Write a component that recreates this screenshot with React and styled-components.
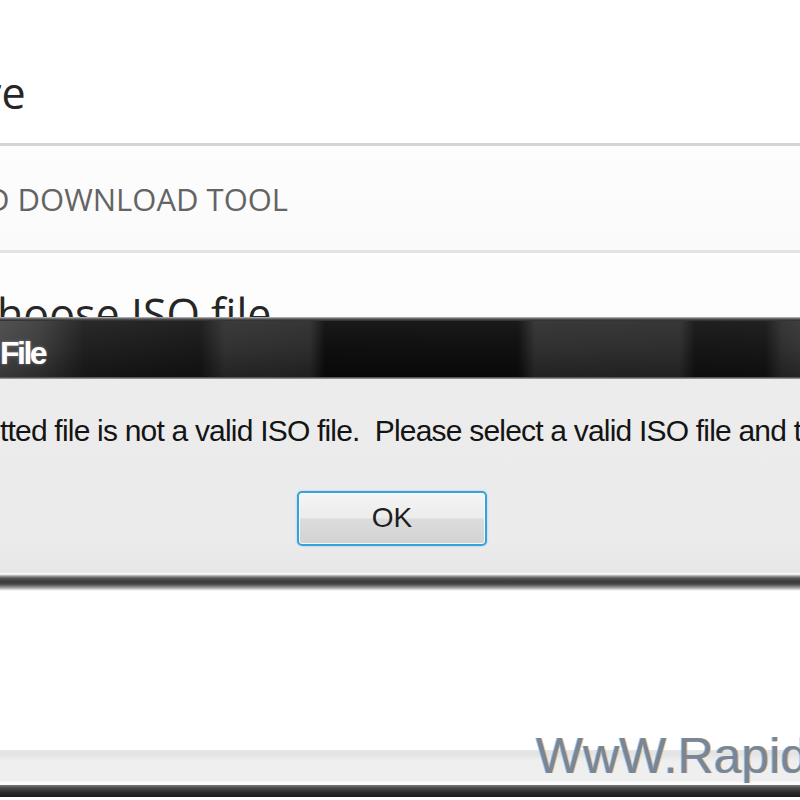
import React from "react";
import styled, { createGlobalStyle } from "styled-components";

const GlobalStyle = createGlobalStyle`
  html, body {
    margin: 0;
    padding: 0;
    background: #ffffff;
    overflow: hidden;
  }
  * { box-sizing: border-box; }
`;

const Page = styled.div`
  position: relative;
  width: 800px;
  height: 800px;
  overflow: hidden;
  background: #ffffff;
  display: flex;
  flex-direction: column;
`;

const Header = styled.header`
  height: 143px;
  padding-top: 71px;
  background: #ffffff;
  overflow: hidden;
`;

const PageTitle = styled.div`
  font-family: "Open Sans", "Liberation Sans", sans-serif;
  font-size: 43px;
  font-weight: 500;
  line-height: 43px;
  color: #262626;
  white-space: nowrap;
  text-indent: ${(p) => p.$indent || 0}px;
`;

const ToolBand = styled.div`
  height: 110px;
  border-top: 3px solid #d5d5d5;
  border-bottom: 3px solid #e3e3e3;
  background: linear-gradient(to bottom, #fdfdfd, #fafafa);
  padding-top: 38px;
  overflow: hidden;
`;

const ToolName = styled.div`
  font-family: "Open Sans", "Liberation Sans", sans-serif;
  font-size: 31px;
  font-weight: 500;
  line-height: 31px;
  color: #646464;
  white-space: nowrap;
  text-indent: -13px;
`;

const StepSection = styled.section`
  height: 64px;
  padding-top: 39px;
  background: #fdfdfd;
  overflow: hidden;
`;

const Dialog = styled.div`
  display: flex;
  flex-direction: column;
`;

const DialogTopEdge = styled.div`
  height: 4px;
  background: linear-gradient(to bottom, #c4c4c4 0, #8c8c8c 1px, #555 2px, #2a2a2a 4px);
`;

const TitleBar = styled.div`
  height: 56px;
  padding-top: 16px;
  background:
    linear-gradient(to bottom, rgba(255,255,255,0.06) 0, rgba(255,255,255,0.02) 45%, rgba(0,0,0,0.25) 100%),
    linear-gradient(to right,
      #474747 0, #3a3a3a 40px, #1c1c1c 85px, #151515 200px, #2f2f2f 225px,
      #2a2a2a 310px, #0b0b0b 325px, #0c0c0c 518px, #2d2d2d 535px,
      #2b2b2b 680px, #121212 695px, #131313 765px, #2c2c2c 782px, #323232 800px);
`;

const TitleText = styled.div`
  font-family: "Liberation Sans", Arial, sans-serif;
  font-size: 32px;
  font-weight: 700;
  line-height: 32px;
  letter-spacing: -2.5px;
  color: #ffffff;
  text-shadow: 0 0 3px rgba(255, 255, 255, 0.35);
  white-space: nowrap;
`;

const TitleBottomEdge = styled.div`
  height: 2px;
  background: linear-gradient(to bottom, #3c3c3c, #a8a8a8);
`;

const DialogBody = styled.div`
  height: 194px;
  padding-top: 37px;
  background: linear-gradient(to bottom, #ececec, #ebebeb 85%, #e7e7e7);
  display: flex;
  flex-direction: column;
  gap: 45px;
`;

const Message = styled.div`
  font-family: "Liberation Sans", Tahoma, sans-serif;
  font-size: 30px;
  line-height: 30px;
  letter-spacing: -0.8px;
  color: #141414;
  white-space: pre;
  overflow: hidden;
`;

const ButtonRow = styled.div`
  display: flex;
  justify-content: center;
  padding-right: 16px;
`;

const OkButton = styled.button`
  width: 190px;
  height: 55px;
  border: 2px solid #35a3da;
  border-radius: 5px;
  background: linear-gradient(to bottom, #f5f5f5 0, #ececec 48%, #dcdcdc 52%, #d2d2d2 100%);
  box-shadow: inset 0 0 0 1px rgba(255, 255, 255, 0.85), 0 0 2px rgba(60, 170, 225, 0.5);
  font-family: "Liberation Sans", Tahoma, sans-serif;
  font-size: 28px;
  line-height: 28px;
  color: #1e1e1e;
  padding: 0;
  padding-bottom: 2px;
`;

const DialogBottomFrame = styled.div`
  height: 18px;
  background: linear-gradient(to bottom,
    #f6f6f6 0, #ffffff 1px, #a0a0a0 3px, #5a5a5a 5px, #3c3c3c 8px,
    #444 11px, #8a8a8a 14px, #e6e6e6 17px, #ffffff 18px);
`;

const LowerArea = styled.div`
  height: 159px;
  background: #ffffff;
`;

const StatusBar = styled.div`
  height: 35px;
  background: linear-gradient(to bottom,
    #e6e6e6 0, #e3e3e3 4px, #ececec 9px, #efefef 12px, #efefef 31px,
    #fafafa 32px, #fbfbfb 35px);
`;

const WindowBottomEdge = styled.div`
  height: 12px;
  background: linear-gradient(to bottom, #7a7a7a 0, #4a4a4a 3px, #2c2c2c 7px, #1c1c1c 12px);
`;

const Watermark = styled.div`
  position: absolute;
  left: 536px;
  top: 731px;
  font-family: "Liberation Sans", Arial, sans-serif;
  font-size: 50px;
  line-height: 50px;
  color: #7b8694;
  white-space: nowrap;
  text-shadow: -1px 0 rgba(80, 150, 230, 0.55), 1px 0 rgba(225, 165, 90, 0.55);
  pointer-events: none;
`;

export default function App() {
  return (
    <>
      <GlobalStyle />
      <Page>
        <Header>
          <PageTitle $indent={-16}>re</PageTitle>
        </Header>
        <ToolBand>
          <ToolName>D DOWNLOAD TOOL</ToolName>
        </ToolBand>
        <StepSection>
          <PageTitle $indent={-3}>hoose ISO file</PageTitle>
        </StepSection>
        <Dialog>
          <DialogTopEdge />
          <TitleBar>
            <TitleText>File</TitleText>
          </TitleBar>
          <TitleBottomEdge />
          <DialogBody>
            <Message>{"tted file is not a valid ISO file.  Please select a valid ISO file and try again."}</Message>
            <ButtonRow>
              <OkButton>OK</OkButton>
            </ButtonRow>
          </DialogBody>
          <DialogBottomFrame />
        </Dialog>
        <LowerArea />
        <StatusBar />
        <WindowBottomEdge />
        <Watermark>WwW.Rapid</Watermark>
      </Page>
    </>
  );
}
